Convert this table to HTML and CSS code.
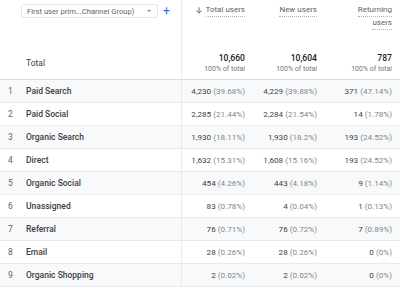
FILE: index.html
```html
<!DOCTYPE html>
<html>
<head>
<meta charset="utf-8">
<link rel="stylesheet" href="styles.css">
</head>
<body>
<div class="report">
  <div class="hcell dim-head">
    <div class="picker-row">
      <div class="picker"><span class="picker-text">First user prim...Channel Group)</span><span class="caret"></span></div>
      <span class="plus">+</span>
    </div>
    <div class="total-label">Total</div>
  </div>
  <div class="hcell metric-head">
    <div class="mlabel"><svg class="arrow" viewBox="0 0 10 10" width="8" height="9"><path d="M5 1v7M1.8 5l3.2 3.2L8.2 5" fill="none" stroke="#5f6368" stroke-width="1.2"/></svg><span class="dotted">Total users</span></div>
    <div class="tot"><div class="tval">10,660</div><div class="tpct">100% of total</div></div>
  </div>
  <div class="hcell metric-head">
    <div class="mlabel"><span class="dotted">New users</span></div>
    <div class="tot"><div class="tval">10,604</div><div class="tpct">100% of total</div></div>
  </div>
  <div class="hcell metric-head">
    <div class="mlabel wrap"><span class="dotted">Returning</span><span class="dotted">users</span></div>
    <div class="tot"><div class="tval">787</div><div class="tpct">100% of total</div></div>
  </div>

  <div class="row odd"><div class="dim"><span class="idx">1</span><span class="name">Paid Search</span></div><div class="num">4,230 <i>(39.68%)</i></div><div class="num">4,229 <i>(39.88%)</i></div><div class="num">371 <i>(47.14%)</i></div></div>
  <div class="row"><div class="dim"><span class="idx">2</span><span class="name">Paid Social</span></div><div class="num">2,285 <i>(21.44%)</i></div><div class="num">2,284 <i>(21.54%)</i></div><div class="num">14 <i>(1.78%)</i></div></div>
  <div class="row odd"><div class="dim"><span class="idx">3</span><span class="name">Organic Search</span></div><div class="num">1,930 <i>(18.11%)</i></div><div class="num">1,930 <i>(18.2%)</i></div><div class="num">193 <i>(24.52%)</i></div></div>
  <div class="row"><div class="dim"><span class="idx">4</span><span class="name">Direct</span></div><div class="num">1,632 <i>(15.31%)</i></div><div class="num">1,608 <i>(15.16%)</i></div><div class="num">193 <i>(24.52%)</i></div></div>
  <div class="row odd"><div class="dim"><span class="idx">5</span><span class="name">Organic Social</span></div><div class="num">454 <i>(4.26%)</i></div><div class="num">443 <i>(4.18%)</i></div><div class="num">9 <i>(1.14%)</i></div></div>
  <div class="row"><div class="dim"><span class="idx">6</span><span class="name">Unassigned</span></div><div class="num">83 <i>(0.78%)</i></div><div class="num">4 <i>(0.04%)</i></div><div class="num">1 <i>(0.13%)</i></div></div>
  <div class="row odd"><div class="dim"><span class="idx">7</span><span class="name">Referral</span></div><div class="num">76 <i>(0.71%)</i></div><div class="num">76 <i>(0.72%)</i></div><div class="num">7 <i>(0.89%)</i></div></div>
  <div class="row"><div class="dim"><span class="idx">8</span><span class="name">Email</span></div><div class="num">28 <i>(0.26%)</i></div><div class="num">28 <i>(0.26%)</i></div><div class="num">0 <i>(0%)</i></div></div>
  <div class="row odd"><div class="dim"><span class="idx">9</span><span class="name">Organic Shopping</span></div><div class="num">2 <i>(0.02%)</i></div><div class="num">2 <i>(0.02%)</i></div><div class="num">0 <i>(0%)</i></div></div>
</div>
</body>
</html>
```
FILE: styles.css
```css
html, body {
  margin: 0;
  padding: 0;
  background: #ffffff;
}
body {
  font-family: Roboto, "Liberation Sans", Arial, sans-serif;
  color: #202124;
  width: 400px;
  height: 288px;
  overflow: hidden;
}
.report {
  display: grid;
  grid-template-columns: 182px 71px 72px 75px;
  grid-template-rows: 80px;
  grid-auto-rows: 23px;
}
.hcell {
  border-bottom: 1px solid #dadce0;
  box-sizing: border-box;
}
.dim-head {
  border-right: 1px solid #e8eaed;
  display: flex;
  flex-direction: column;
  justify-content: space-between;
  padding: 4px 0 11px 21px;
}
.picker-row {
  display: flex;
  align-items: center;
  gap: 5px;
}
.picker {
  width: 137px;
  height: 14px;
  box-sizing: border-box;
  border: 1px solid #e3e5e8;
  border-radius: 3px;
  display: flex;
  align-items: center;
  justify-content: space-between;
  padding: 0 6px 0 5px;
  font-size: 7.6px;
  color: #5f6368;
}
.caret {
  width: 0;
  height: 0;
  border-left: 2.5px solid transparent;
  border-right: 2.5px solid transparent;
  border-top: 2.5px solid #80868b;
}
.plus {
  color: #1a73e8;
  font-size: 12px;
  line-height: 12px;
  font-weight: 400;
}
.total-label {
  font-size: 8.5px;
  color: #3c4043;
  padding-left: 5px;
}
.metric-head {
  display: flex;
  flex-direction: column;
  justify-content: space-between;
  align-items: flex-end;
  padding: 5px 8px 4px 0;
}
.mlabel {
  display: flex;
  align-items: flex-start;
  gap: 3px;
  font-size: 8px;
  color: #5f6368;
  line-height: 10px;
}
.mlabel.wrap {
  flex-direction: column;
  align-items: flex-end;
  gap: 1px;
}
.arrow {
  margin-top: 1px;
}
.dotted {
  border-bottom: 1px dotted #b0b4b9;
  padding-bottom: 1px;
}
.tot {
  text-align: right;
}
.tval {
  font-size: 8.6px;
  font-weight: 500;
  color: #202124;
  line-height: 12px;
}
.tpct {
  font-size: 7px;
  color: #70757a;
  line-height: 11px;
}
.row {
  display: contents;
}
.row > div {
  border-bottom: 1px solid #e8eaed;
  box-sizing: border-box;
  display: flex;
  align-items: center;
}
.row.odd > div {
  background: #f8f9fa;
}
.dim {
  border-right: 1px solid #e8eaed;
  font-size: 8.5px;
}
.idx {
  width: 26px;
  padding-left: 8px;
  box-sizing: border-box;
  color: #5f6368;
}
.name {
  font-weight: 500;
  color: #3c4043;
}
.num {
  justify-content: flex-end;
  padding-right: 8px;
  font-size: 8.1px;
  color: #3c4043;
  white-space: pre;
}
.num i {
  font-style: normal;
  color: #80868b;
}
```
